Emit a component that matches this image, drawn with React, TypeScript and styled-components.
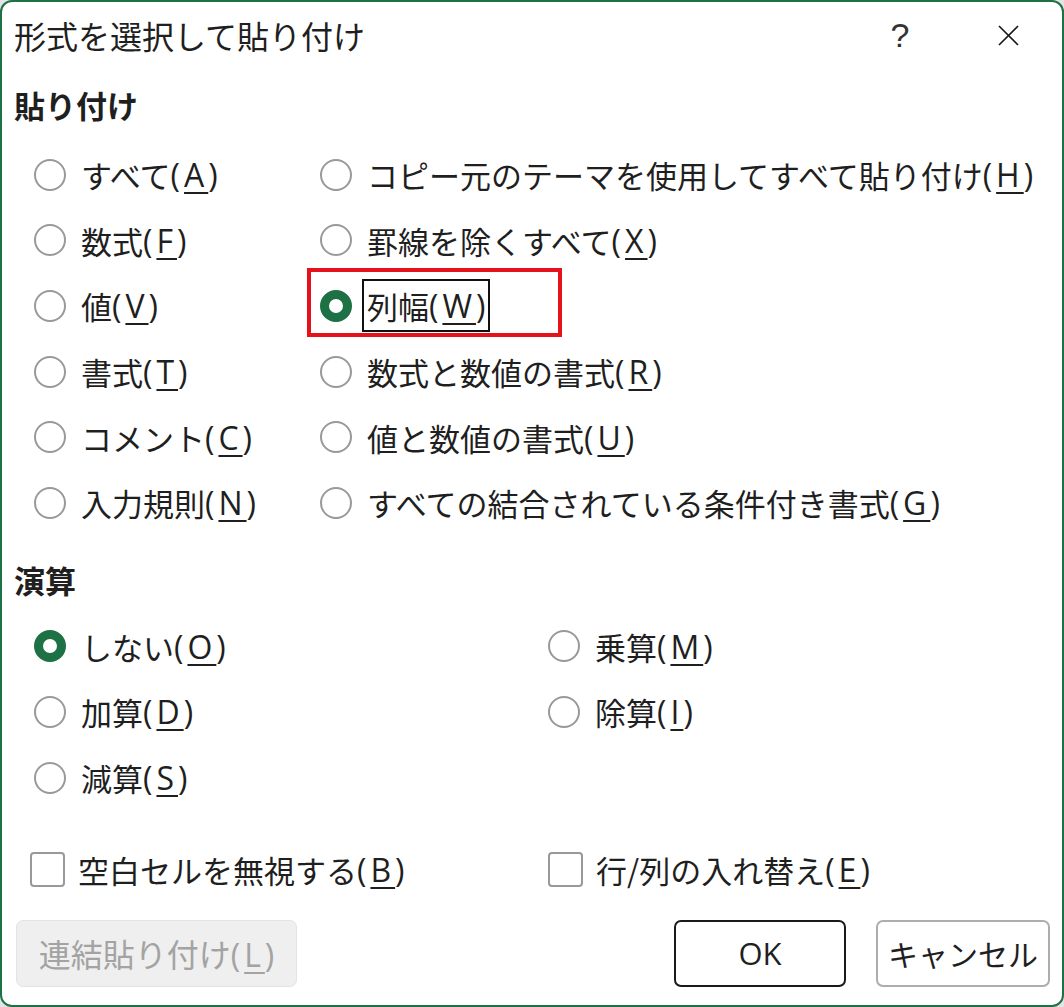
import styled, { createGlobalStyle, css } from 'styled-components';

const GlobalStyle = createGlobalStyle`
  html, body {
    margin: 0;
    padding: 0;
    background: #e4e4e4;
  }
  *, *::before, *::after {
    box-sizing: border-box;
  }
`;

const FONT = `"Noto Sans CJK JP", "Noto Sans", sans-serif`;
const LATIN = `"Open Sans", "Noto Sans CJK JP", sans-serif`;
const GREEN = '#1e7145';
const TEXT = '#1f1f1f';

const Dialog = styled.div`
  width: 1064px;
  height: 1007px;
  display: flex;
  flex-direction: column;
  background: #fff;
  border: 2px solid ${GREEN};
  border-radius: 12px;
  font-family: ${FONT};
  color: ${TEXT};
  overflow: hidden;
`;

const TitleBar = styled.div`
  display: flex;
  align-items: center;
  height: 72px;
  padding: 0 4px 6px 12px;
`;

const Title = styled.div`
  flex: 1;
  font-size: 32px;
  line-height: 40px;
`;

const ControlButton = styled.div`
  width: 100px;
  height: 60px;
  margin-left: 8px;
  display: flex;
  align-items: center;
  justify-content: center;
`;

const HelpGlyph = styled.span`
  font-family: "Liberation Sans", sans-serif;
  font-size: 34px;
  line-height: 1;
  color: #333;
`;

const Body = styled.div`
  flex: 1;
  display: flex;
  flex-direction: column;
  padding: 0 12px;
`;

const SectionHeading = styled.div<{ $top: number }>`
  margin-top: ${({ $top }) => $top}px;
  font-size: 31px;
  font-weight: bold;
  line-height: 40px;
`;

const OptionGrid = styled.div<{ $top: number; $left: number; $col: number }>`
  display: grid;
  grid-template-columns: ${({ $col }) => $col}px 1fr;
  grid-auto-rows: 65.6px;
  margin-top: ${({ $top }) => $top}px;
  margin-left: ${({ $left }) => $left}px;
`;

const Option = styled.label<{ $marked?: boolean }>`
  position: relative;
  display: flex;
  align-items: center;
  gap: 10px;
  white-space: nowrap;

  ${({ $marked }) =>
    $marked &&
    css`
      &::after {
        content: '';
        position: absolute;
        left: -13px;
        top: -5px;
        width: 255px;
        height: 69px;
        border: 4px solid #e5121b;
        pointer-events: none;
      }
    `}
`;

const Radio = styled.span<{ $checked?: boolean }>`
  flex: none;
  width: 32px;
  height: 32px;
  border-radius: 50%;
  border: ${({ $checked }) => ($checked ? `9.5px solid ${GREEN}` : '2px solid #999')};
  background: #fff;
`;

const CheckBox = styled.span`
  flex: none;
  width: 35px;
  height: 35px;
  margin-right: -2px;
  border: 2px solid #999;
  border-radius: 4px;
  background: #fff;
`;

const Label = styled.span<{ $focused?: boolean }>`
  height: 53px;
  padding: 0 3px;
  display: flex;
  align-items: center;
  font-size: 31px;
  border: 2px solid ${({ $focused }) => ($focused ? '#111' : 'transparent')};
`;

const Key = styled.span`
  font-family: ${LATIN};
  font-size: 32px;
  letter-spacing: 4px;
  margin-right: -4px;

  u {
    text-decoration-thickness: 2px;
    text-underline-offset: 5px;
  }
`;

const ButtonRow = styled.div`
  display: flex;
  align-items: center;
  margin-top: 18px;
  padding-left: 2px;
`;

const Spacer = styled.div`
  flex: 1;
`;

const Button = styled.button<{ $variant?: 'default' | 'primary' | 'disabled'; $width: number }>`
  width: ${({ $width }) => $width}px;
  height: 67px;
  margin-left: ${({ $variant }) => ($variant === 'default' ? '30px' : '0')};
  font-family: ${FONT};
  font-size: 30px;
  border-radius: 7px;
  padding: 0;
  background: #fff;
  color: ${TEXT};
  border: 2px solid #adadad;

  ${({ $variant }) =>
    $variant === 'primary' &&
    css`
      border: 2.5px solid #1a1a1a;
      font-family: ${LATIN};
      font-size: 31px;
    `}

  ${({ $variant }) =>
    $variant === 'disabled' &&
    css`
      background: #efefef;
      border: 1px solid #e3e3e3;
      color: #a3a3a3;
      font-size: 32px;
    `}
`;

const CloseIcon = () => (
  <svg width="21" height="21" viewBox="0 0 21 21">
    <path d="M1 1 L20 20 M20 1 L1 20" stroke="#1a1a1a" strokeWidth="1.7" fill="none" />
  </svg>
);

type Choice = { text: string; key: string; checked?: boolean; focused?: boolean; marked?: boolean };

const pasteChoices: Choice[] = [
  { text: 'すべて', key: 'A' },
  { text: 'コピー元のテーマを使用してすべて貼り付け', key: 'H' },
  { text: '数式', key: 'F' },
  { text: '罫線を除くすべて', key: 'X' },
  { text: '値', key: 'V' },
  { text: '列幅', key: 'W', checked: true, focused: true, marked: true },
  { text: '書式', key: 'T' },
  { text: '数式と数値の書式', key: 'R' },
  { text: 'コメント', key: 'C' },
  { text: '値と数値の書式', key: 'U' },
  { text: '入力規則', key: 'N' },
  { text: 'すべての結合されている条件付き書式', key: 'G' },
];

const operationChoices: Choice[] = [
  { text: 'しない', key: 'O', checked: true },
  { text: '乗算', key: 'M' },
  { text: '加算', key: 'D' },
  { text: '除算', key: 'I' },
  { text: '減算', key: 'S' },
];

const Caption = ({ text, k }: { text: string; k: string }) => (
  <>
    {text}
    <Key>
      (<u>{k}</u>)
    </Key>
  </>
);

const RadioOption = ({ choice }: { choice: Choice }) => (
  <Option $marked={choice.marked}>
    <Radio $checked={choice.checked} />
    <Label $focused={choice.focused}>
      <Caption text={choice.text} k={choice.key} />
    </Label>
  </Option>
);

export default function App() {
  return (
    <>
      <GlobalStyle />
      <Dialog>
        <TitleBar>
          <Title>形式を選択して貼り付け</Title>
          <ControlButton>
            <HelpGlyph>?</HelpGlyph>
          </ControlButton>
          <ControlButton>
            <CloseIcon />
          </ControlButton>
        </TitleBar>

        <Body>
          <SectionHeading $top={11}>貼り付け</SectionHeading>
          <OptionGrid $top={17} $left={20} $col={286}>
            {pasteChoices.map((c) => (
              <RadioOption key={c.key} choice={c} />
            ))}
          </OptionGrid>

          <SectionHeading $top={24}>演算</SectionHeading>
          <OptionGrid $top={14} $left={20} $col={514}>
            {operationChoices.map((c) => (
              <RadioOption key={c.key} choice={c} />
            ))}
          </OptionGrid>

          <OptionGrid $top={26} $left={16} $col={518}>
            <Option>
              <CheckBox />
              <Label>
                <Caption text="空白セルを無視する" k="B" />
              </Label>
            </Option>
            <Option>
              <CheckBox />
              <Label>
                <Caption text="行/列の入れ替え" k="E" />
              </Label>
            </Option>
          </OptionGrid>

          <ButtonRow>
            <Button $variant="disabled" $width={281}>
              <Caption text="連結貼り付け" k="L" />
            </Button>
            <Spacer />
            <Button $variant="primary" $width={172}>
              OK
            </Button>
            <Button $variant="default" $width={174}>
              キャンセル
            </Button>
          </ButtonRow>
        </Body>
      </Dialog>
    </>
  );
}
